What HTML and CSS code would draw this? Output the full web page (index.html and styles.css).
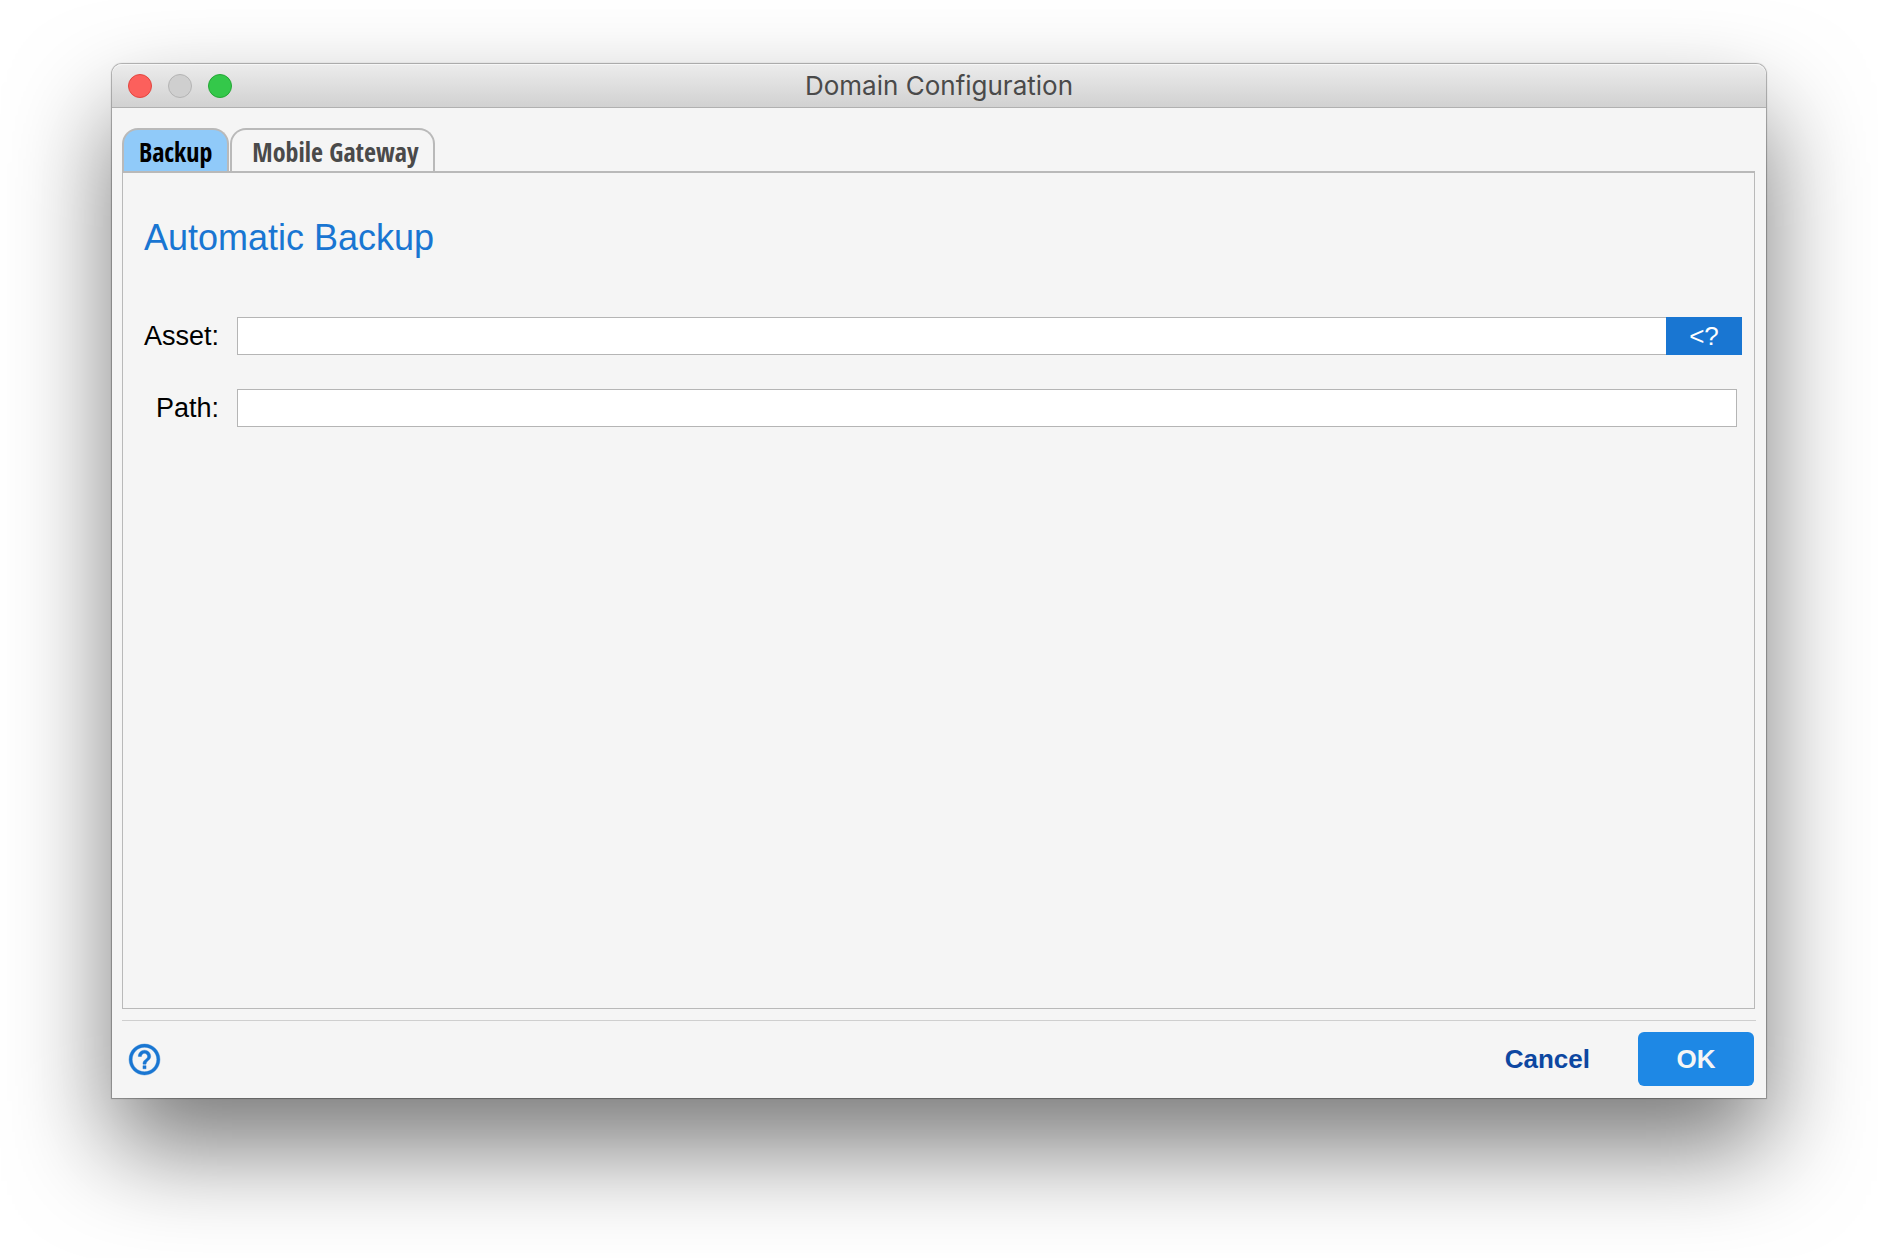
FILE: index.html
```html
<!DOCTYPE html>
<html lang="en">
<head>
	<meta charset="utf-8">
	<title>Domain Configuration</title>
	<link rel="stylesheet" href="styles.css">
</head>
<body>
	<div class="window">
		<header class="titlebar">
			<div class="lights">
				<button class="light close" type="button" aria-label="Close"></button>
				<button class="light minimize" type="button" aria-label="Minimize" disabled></button>
				<button class="light maximize" type="button" aria-label="Zoom"></button>
			</div>
			<h1 class="title">Domain Configuration</h1>
		</header>
		<form class="content">
			<div class="tabs" role="tablist">
				<button class="tab active" type="button" role="tab" aria-selected="true">Backup</button>
				<button class="tab" type="button" role="tab" aria-selected="false">Mobile Gateway</button>
			</div>
			<div class="panel" role="tabpanel">
				<h2>Automatic Backup</h2>
				<div class="fields">
					<label for="asset">Asset:</label>
					<div class="field">
						<input type="text" id="asset">
						<button class="lookup" type="button">&lt;?</button>
					</div>
					<label for="path">Path:</label>
					<div class="field path">
						<input type="text" id="path">
					</div>
				</div>
			</div>
			<footer class="footer">
				<button class="help" type="button" aria-label="Help">
					<svg viewBox="0 0 24 24" width="37" height="37" fill="currentColor" stroke="currentColor" stroke-width=".3">
						<path d="M11 18h2v-2h-2v2zm1-16C6.480 2 2 6.480 2 12s4.480 10 10 10 10-4.480 10-10S17.520 2 12 2zm0 18c-4.410 0-8-3.590-8-8s3.590-8 8-8 8 3.590 8 8-3.590 8-8 8zm0-14c-2.210 0-4 1.790-4 4h2c0-1.100.9-2 2-2s2 .9 2 2c0 2-3 1.750-3 5h2c0-2.250 3-2.500 3-5 0-2.210-1.790-4-4-4z"/>
					</svg>
				</button>
				<button class="cancel" type="button">Cancel</button>
				<button class="ok" type="submit">OK</button>
			</footer>
		</form>
	</div>
</body>
</html>
```
FILE: styles.css
```css
*{
	box-sizing: border-box;
	margin: 0;
	padding: 0;
}
body{
	display: flex;
	min-height: 100vh;
	padding: 64px 112px 160px;
	background: #fff;
	font-family: "Liberation Sans", Arial, sans-serif;
	font-size: 26px;
	line-height: 30px;
	color: #000;
}
button{
	border: 0;
	background: none;
	font: inherit;
	cursor: pointer;
}
.window{
	flex: 1;
	display: flex;
	flex-direction: column;
	background: #f5f5f5;
	border-radius: 10px 10px 0 0;
	box-shadow: 0 0 1px 1px rgba(0,0,0,.3), 0 50px 100px rgba(0,0,0,.53);
}

/* title bar */
.titlebar{
	display: grid;
	grid-template-columns: 1fr auto 1fr;
	align-items: center;
	height: 44px;
	padding: 0 16px;
	border-bottom: 1px solid #b0b0b0;
	border-radius: 10px 10px 0 0;
	background: linear-gradient(#ececec, #d1d1d1);
	box-shadow: inset 0 1px 0 #f6f6f6;
}
.lights{
	display: flex;
	gap: 16px;
}
.light{
	width: 24px;
	height: 24px;
	border: 1px solid #b4b4b4;
	border-radius: 50%;
	background: #cfcfcf;
}
.light.close{
	border-color: #e2463f;
	background: #fc605c;
}
.light.maximize{
	border-color: #24a735;
	background: #34c84a;
}
.title{
	font-family: Inter, Roboto, sans-serif;
	font-size: 26px;
	font-weight: 400;
	color: #4a4a4a;
}

/* tabs and panel */
.content{
	flex: 1;
	display: flex;
	flex-direction: column;
	padding: 20px 10px 12px;
}
.tabs{
	display: flex;
	gap: 1px;
}
.tab{
	height: 43px;
	padding: 2px 15px 0;
	border: 2px solid #b9b9b9;
	border-bottom: 0;
	border-radius: 16px 16px 0 0;
	font-family: "Open Sans Condensed", "Liberation Sans Narrow", "Open Sans", sans-serif;
	font-weight: 700;
	color: #4a4a4a;
}
.tab + .tab{
	padding-left: 20px;
}
.tab.active{
	background: #90caf9;
	color: #000;
}
.panel{
	flex: 1;
	margin-right: 1px;
	padding: 44px 12px 20px 21px;
	border: 1px solid #b9b9b9;
	border-top-width: 2px;
}
h2{
	margin-bottom: 58px;
	font-size: 36px;
	font-weight: 400;
	line-height: 42px;
	color: #1976d2;
}
.fields{
	display: grid;
	grid-template-columns: auto 1fr;
	align-items: center;
	gap: 34px 18px;
}
.fields label{
	font-size: 27px;
	text-align: right;
}
.field{
	display: flex;
}
.field.path{
	margin-right: 5px;
}
.field input{
	flex: 1;
	min-width: 0;
	height: 38px;
	padding: 0 8px;
	border: 1px solid #b5b5b5;
	background: #fff;
	font: inherit;
}
#asset{
	border-right: 0;
}
.lookup{
	width: 76px;
	background: #1976d2;
	color: #fff;
}

/* footer */
.footer{
	display: flex;
	align-items: center;
	margin-top: 11px;
	padding: 11px 2px 0 4px;
	border-top: 1px solid #cfcfcf;
}
.help{
	display: flex;
	margin-right: auto;
	color: #1976d2;
}
.cancel,
.ok{
	height: 54px;
	border-radius: 6px;
	font-weight: 700;
}
.cancel{
	padding: 0 48px;
	color: #0d47a1;
}
.ok{
	width: 116px;
	background: #1e88e5;
	color: #f5f5f5;
}
```
